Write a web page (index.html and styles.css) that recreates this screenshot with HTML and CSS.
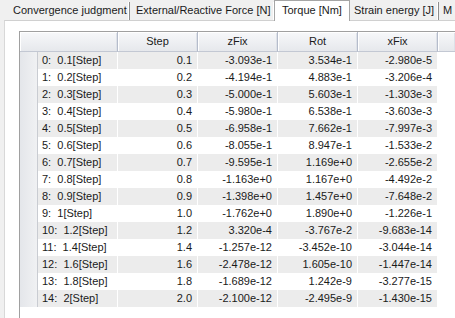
FILE: index.html
```html
<!DOCTYPE html>
<html lang="en">
<head>
    <meta charset="UTF-8">
    <title>Results - Torque</title>
    <link rel="stylesheet" href="styles.css">
</head>
<body>
    <div class="tabs">
        <div class="tab tab-conv">Convergence judgment</div>
        <div class="tab tab-ext">External/Reactive Force [N]</div>
        <div class="tab tab-torque active">Torque [Nm]</div>
        <div class="tab tab-strain">Strain energy [J]</div>
        <div class="tab tab-more">M</div>
    </div>

    <div class="panel">
        <div class="grid">
            <div class="row head">
                <div class="hcell corner"></div>
                <div class="hcell">Step</div>
                <div class="hcell">zFix</div>
                <div class="hcell">Rot</div>
                <div class="hcell">xFix</div>
                <div class="hcell filler"></div>
            </div>
            <div id="rows"></div>
        </div>
    </div>

    <script>
        const data = [
            ['0:  0.1[Step]', '0.1', '-3.093e-1', '3.534e-1', '-2.980e-5'],
            ['1:  0.2[Step]', '0.2', '-4.194e-1', '4.883e-1', '-3.206e-4'],
            ['2:  0.3[Step]', '0.3', '-5.000e-1', '5.603e-1', '-1.303e-3'],
            ['3:  0.4[Step]', '0.4', '-5.980e-1', '6.538e-1', '-3.603e-3'],
            ['4:  0.5[Step]', '0.5', '-6.958e-1', '7.662e-1', '-7.997e-3'],
            ['5:  0.6[Step]', '0.6', '-8.055e-1', '8.947e-1', '-1.533e-2'],
            ['6:  0.7[Step]', '0.7', '-9.595e-1', '1.169e+0', '-2.655e-2'],
            ['7:  0.8[Step]', '0.8', '-1.163e+0', '1.167e+0', '-4.492e-2'],
            ['8:  0.9[Step]', '0.9', '-1.398e+0', '1.457e+0', '-7.648e-2'],
            ['9:  1[Step]', '1.0', '-1.762e+0', '1.890e+0', '-1.226e-1'],
            ['10:  1.2[Step]', '1.2', '3.320e-4', '-3.767e-2', '-9.683e-14'],
            ['11:  1.4[Step]', '1.4', '-1.257e-12', '-3.452e-10', '-3.044e-14'],
            ['12:  1.6[Step]', '1.6', '-2.478e-12', '1.605e-10', '-1.447e-14'],
            ['13:  1.8[Step]', '1.8', '-1.689e-12', '1.242e-9', '-3.277e-15'],
            ['14:  2[Step]', '2.0', '-2.100e-12', '-2.495e-9', '-1.430e-15']
        ];

        const rows = document.getElementById('rows');
        data.forEach((r, i) => {
            const row = document.createElement('div');
            row.className = 'row body' + (i % 2 === 0 ? ' alt' : '');

            const rh = document.createElement('div');
            rh.className = 'rowhead';
            row.appendChild(rh);

            r.forEach((v, j) => {
                const c = document.createElement('div');
                c.className = 'cell' + (j === 0 ? ' label' : ' num');
                c.textContent = v;
                row.appendChild(c);
            });
            rows.appendChild(row);
        });
    </script>
</body>
</html>
```

FILE: styles.css
```css
* {
    margin: 0;
    padding: 0;
    box-sizing: border-box;
}

body {
    background: #f0f0f0;
    font-family: 'Liberation Sans', Arial, sans-serif;
    font-size: 11px;
    color: #1a1a1a;
    width: 455px;
    height: 318px;
    overflow: hidden;
}

/* Tab strip */
.tabs {
    display: flex;
    align-items: flex-end;
    height: 20px;
    position: relative;
    z-index: 1;
}

.tab {
    height: 18px;
    line-height: 16px;
    flex: none;
    white-space: nowrap;
    overflow: hidden;
    border-right: 1px solid #8d8d8d;
    box-shadow: inset -1px 0 0 #ffffff;
}

.tab-conv {
    width: 130px;
    padding-left: 13px;
}

.tab-ext {
    width: 145px;
    padding-left: 6px;
}

.tab-torque {
    width: 76px;
    padding-left: 7px;
}

.tab-strain {
    width: 89px;
    padding-left: 4px;
}

.tab-more {
    width: 20px;
    padding-left: 4px;
    border-right: none;
}

.tab.active {
    height: 21px;
    line-height: 18px;
    background: #ffffff;
    border: 1px solid #a5a5a5;
    border-bottom: none;
    box-shadow: none;
    margin-left: -1px;
    margin-bottom: -1px;
}

/* Tab page */
.panel {
    margin-left: 4px;
    height: 298px;
    background: #ffffff;
    border-left: 1px solid #d8d8d8;
    border-top: 1px solid #d0d0d0;
    padding: 10px 0 0 14px;
}

.grid {
    height: 100%;
    border-left: 1px solid #a0a0a0;
    border-top: 1px solid #a0a0a0;
    background: #ffffff;
}

.row {
    display: flex;
}

.head {
    height: 20px;
}

.hcell {
    flex: none;
    width: 80px;
    line-height: 19px;
    text-align: center;
    background: linear-gradient(#f7f8fa, #e6e8ec);
    border-right: 1px solid #b5bccb;
    border-bottom: 1px solid #c3c8d3;
    box-shadow: inset 1px 1px 0 #ffffff, inset -1px 0 0 #dde1e8;
}

.hcell.corner {
    width: 98px;
}

.hcell.filler {
    flex: 1;
    border-right: none;
}

.body {
    height: 17px;
}

.rowhead {
    flex: none;
    width: 18px;
    background: linear-gradient(90deg, #e4e6ea, #f0f1f3);
    border-right: 1px solid #c9ccd2;
}

.cell {
    flex: none;
    width: 80px;
    line-height: 17px;
    white-space: pre;
    background: #ffffff;
    border-right: 1px solid #ffffff;
    overflow: hidden;
}

.alt .cell {
    background-color: #ececec;
}

.cell.label {
    padding-left: 4px;
}

.cell.num {
    text-align: right;
    padding-right: 5px;
}
```
